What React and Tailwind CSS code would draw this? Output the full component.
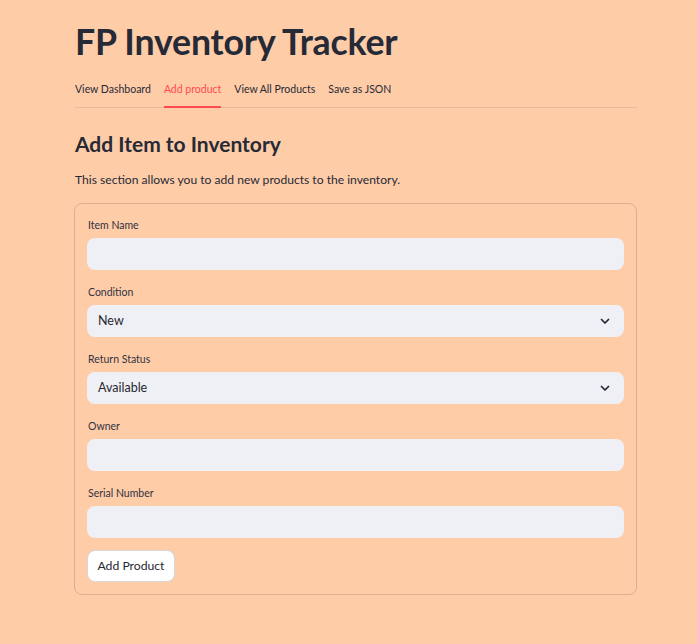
import React from "react";

function Chevron() {
  return (
    <svg width="12" height="12" viewBox="0 0 24 24" fill="none" stroke="#262730" strokeWidth="3.5" strokeLinecap="round" strokeLinejoin="round">
      <path d="M5 9l7 7 7-7" />
    </svg>
  );
}

function Field({ label, value, select }) {
  return (
    <div className="flex flex-col">
      <div className="h-[14px] text-[10.5px] leading-[14px] text-[#31333f] mb-[6px] ml-[1px]">{label}</div>
      <div className="h-[32px] rounded-[8px] bg-[#eff0f5] flex items-center justify-between pl-[11px] pr-[13px] text-[12.5px] text-[#262730]">
        <span>{value}</span>
        {select && <Chevron />}
      </div>
    </div>
  );
}

export default function App() {
  return (
    <div className="min-h-screen bg-[#ffcca8] font-['Lato',sans-serif] text-[#262a36]">
      <div className="pl-[75px] w-[637px] pt-[18px] pb-[48px]">
        <h1 className="text-[35.7px] leading-[48px] font-bold tracking-[-0.2px]">FP Inventory Tracker</h1>
        <div className="mt-[7px] flex gap-[13px] border-b border-[#eab89a] text-[10.5px] h-[35px]">
          <div className="flex items-center">View Dashboard</div>
          <div className="flex items-center text-[#ff4b4b] border-b-2 border-[#ff4b4b] -mb-[1px]">Add product</div>
          <div className="flex items-center">View All Products</div>
          <div className="flex items-center">Save as JSON</div>
        </div>
        <h2 className="mt-[22px] text-[21px] leading-[28px] font-bold">Add Item to Inventory</h2>
        <p className="mt-[13px] text-[12.1px] leading-[18px]">This section allows you to add new products to the inventory.</p>
        <div className="mt-[14px] -ml-[1px] border border-[#dcaf91] rounded-[8px] px-[12px] pt-[14px] pb-[12px] flex flex-col gap-[15px]">
          <Field label="Item Name" value="" />
          <Field label="Condition" value="New" select />
          <Field label="Return Status" value="Available" select />
          <Field label="Owner" value="" />
          <Field label="Serial Number" value="" />
          <div className="-mt-[3px]">
            <button className="h-[32px] w-[88px] rounded-[8px] bg-white border border-[#d6d6dc] text-[12.2px] text-[#262730]">Add Product</button>
          </div>
        </div>
      </div>
    </div>
  );
}
